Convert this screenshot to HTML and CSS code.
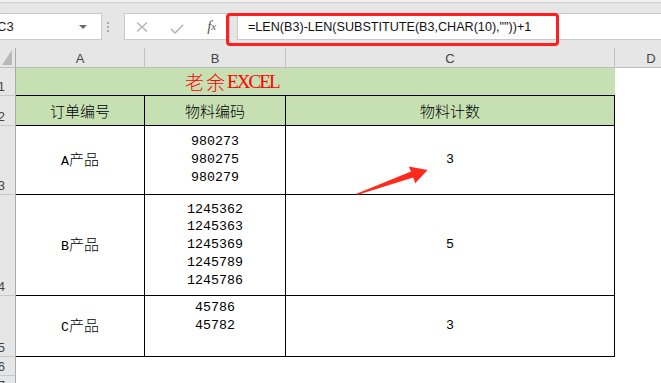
FILE: index.html
```html
<!DOCTYPE html>
<html lang="zh-CN">
<head>
  <meta charset="UTF-8">
  <title>老余EXCEL - 物料计数</title>
  <link rel="stylesheet" href="styles.css">
</head>
<body>
  <div class="page">
    <div class="formula-bar">
      <div class="name-box">
        <span class="ref">C3</span>
        <span class="caret"></span>
      </div>
      <div class="grip"><i></i><i></i><i></i></div>
      <div class="fx-buttons">
        <span class="btn">
          <svg width="12" height="10" viewBox="0 0 12 10"><path d="M1 0.5 L11 9.5 M11 0.5 L1 9.5" stroke="#b3b3b3" stroke-width="1.3" fill="none"/></svg>
        </span>
        <span class="btn">
          <svg width="14" height="10" viewBox="0 0 14 10"><path d="M0.8 4.8 L5 9 L13.2 0.8" stroke="#b3b3b3" stroke-width="1.5" fill="none"/></svg>
        </span>
        <span class="btn fx"><i>f</i><sub>x</sub></span>
      </div>
      <div class="formula-input">=LEN(B3)-LEN(SUBSTITUTE(B3,CHAR(10),""))+1</div>
      <div class="mark"></div>
    </div>

    <div class="sheet">
      <div class="corner"><span class="tri"></span></div>
      <div class="col-head">A</div>
      <div class="col-head">B</div>
      <div class="col-head">C</div>
      <div class="col-head last">D</div>

      <div class="row-head">1</div>
      <div class="title"><span class="cn">老余</span><span class="en">EXCEL</span></div>
      <div class="col-d"></div>

      <div class="row-head">2</div>
      <div class="cell head">订单编号</div>
      <div class="cell head">物料编码</div>
      <div class="cell head">物料计数</div>

      <div class="row-head">3</div>
      <div class="cell"><span><span class="num">A</span>产品</span></div>
      <div class="cell num lines">980273<br>980275<br>980279</div>
      <div class="cell num">3</div>

      <div class="row-head">4</div>
      <div class="cell"><span><span class="num">B</span>产品</span></div>
      <div class="cell num lines">1245362<br>1245363<br>1245369<br>1245789<br>1245786</div>
      <div class="cell num">5</div>

      <div class="row-head">5</div>
      <div class="cell"><span><span class="num">C</span>产品</span></div>
      <div class="cell num lines">45786<br>45782<br>&nbsp;</div>
      <div class="cell num">3</div>

      <div class="row-head">6</div>
      <div class="blank"></div>

      <div class="row-head">7</div>
      <div class="blank"></div>
    </div>

    <svg class="arrow" width="661" height="383" viewBox="0 0 661 383">
      <polygon points="356.5,193.8 411,171.6 408.8,166.4 427.6,170 415.2,183.2 413.2,177.6 358,194.8" fill="#ff2a1f"/>
    </svg>
  </div>
</body>
</html>
```

FILE: styles.css
```css
html, body
{
  margin: 0;
  width: 661px;
  height: 383px;
  overflow: hidden;
  background: #fff;
}
.page
{
  position: relative;
  width: 661px;
  height: 383px;
  overflow: hidden;
}

/* formula bar */
.formula-bar
{
  position: relative;
  height: 48px;
  box-sizing: border-box;
  padding-top: 11px;
  background: #e6e6e6;
  border-top: 2px solid #f2f2f2;
  display: flex;
  align-items: flex-start;
  font-family: "Liberation Sans", Arial, sans-serif;
}
.formula-bar::before
{
  content: "";
  position: absolute;
  left: 0; right: 0; top: 0;
  height: 1px;
  background: #d0d0d0;
}
.name-box
{
  width: 102px;
  height: 27px;
  box-sizing: border-box;
  background: #fff;
  border: 1px solid #c9c9c9;
  border-left: none;
  display: flex;
  align-items: center;
  justify-content: space-between;
  padding-right: 14px;
}
.name-box .ref
{
  margin-left: -3px;
  font-size: 13px;
  color: #222;
}
.caret
{
  width: 0;
  height: 0;
  border-left: 4px solid transparent;
  border-right: 4px solid transparent;
  border-top: 4px solid #6b6b6b;
}
.grip
{
  width: 3px;
  margin: 9px 14px 0 5px;
  display: flex;
  flex-direction: column;
  gap: 2px;
}
.grip i
{
  display: block;
  width: 2px;
  height: 2px;
  background: #a9a9a9;
}
.fx-buttons
{
  width: 106px;
  height: 27px;
  box-sizing: border-box;
  background: #fff;
  border: 1px solid #c9c9c9;
  display: flex;
  align-items: center;
}
.btn
{
  width: 36px;
  display: flex;
  justify-content: center;
  align-items: center;
}
.btn:nth-child(2) svg
{
  margin-top: 4px;
}
.fx
{
  font-family: "Liberation Serif", serif;
  font-size: 15px;
  color: #555;
  line-height: 15px;
}
.fx sub
{
  font-style: italic;
  font-size: 11px;
  vertical-align: -1px;
}
.formula-input
{
  flex: 1;
  margin-left: 7px;
  height: 27px;
  box-sizing: border-box;
  background: #fff;
  border: 1px solid #c9c9c9;
  border-right: none;
  padding-left: 10px;
  font-size: 12.6px;
  line-height: 26px;
  color: #111;
  white-space: nowrap;
}
.mark
{
  position: absolute;
  left: 226px;
  top: 11px;
  width: 333px;
  height: 33px;
  box-sizing: border-box;
  border: 3px solid #ff1f1f;
  border-radius: 4px;
}

/* sheet */
.sheet
{
  display: grid;
  grid-template-columns: 16px 129px 141px 329px 72px;
  grid-template-rows: 20px 28px 30px 69px 101px 61px 19px 19px;
}
.corner
{
  background: #e6e6e6;
  border-right: 1px solid #ababab;
  border-bottom: 1px solid #bdbdbd;
  display: flex;
  align-items: flex-end;
  justify-content: flex-end;
  padding: 0 3px 2px 0;
}
.tri
{
  width: 0;
  height: 0;
  border-left: 10px solid transparent;
  border-bottom: 15px solid #b8b8b8;
}
.col-head
{
  background: #e6e6e6;
  border-right: 1px solid #c2c2c2;
  border-bottom: 1px solid #bdbdbd;
  font-family: "Liberation Sans", Arial, sans-serif;
  font-size: 13px;
  color: #444;
  display: flex;
  align-items: center;
  justify-content: center;
  padding-top: 2px;
}
.col-head.last
{
  border-right: none;
}
.row-head
{
  background: #e6e6e6;
  border-right: 1px solid #ababab;
  border-bottom: 1px solid #c8c8c8;
  display: flex;
  align-items: flex-end;
  justify-content: flex-end;
  padding: 0 10px 2px 0;
  font-family: "Liberation Sans", Arial, sans-serif;
  font-size: 13px;
  line-height: 13px;
  color: #444;
}
.title
{
  grid-column: 2 / 5;
  background: #c6e0b4;
  border-bottom: 1px solid #000;
  display: flex;
  align-items: center;
  padding-left: 169px;
  color: #ff0000;
}
.title .cn
{
  font-family: "Noto Sans CJK SC", sans-serif;
  font-size: 19px;
  font-weight: 300;
  line-height: 20px;
  letter-spacing: 2px;
}
.title .en
{
  font-family: "Liberation Serif", serif;
  font-size: 19px;
  line-height: 20px;
  letter-spacing: -1.9px;
}
.col-d
{
  grid-column: 5;
  grid-row: 2 / -1;
}
.cell
{
  border-right: 1px solid #000;
  border-bottom: 1px solid #000;
  display: flex;
  align-items: center;
  justify-content: center;
  text-align: center;
  font-family: "Noto Sans CJK SC", sans-serif;
  font-size: 15px;
  font-weight: 300;
  line-height: 18px;
  color: #000;
}
.cell.head
{
  background: #c6e0b4;
}
.num
{
  font-family: "Liberation Mono", "Courier New", monospace;
  font-size: 13.3px;
  font-weight: 400;
}
.lines
{
  line-height: 17.8px;
}
.blank
{
  grid-column: 2 / 5;
}
.arrow
{
  position: absolute;
  left: 0;
  top: 0;
  pointer-events: none;
}
```
